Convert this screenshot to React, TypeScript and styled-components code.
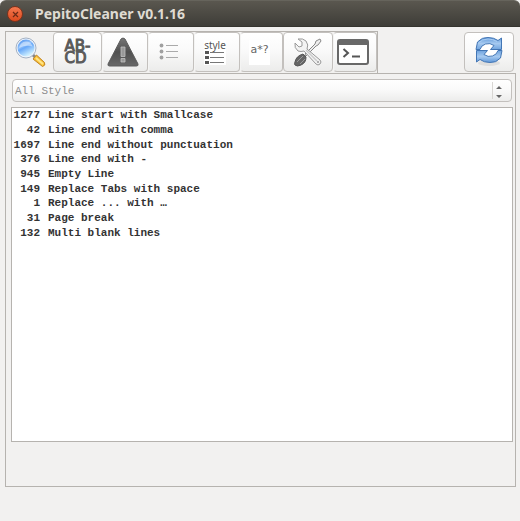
import React from "react";
import styled, { createGlobalStyle, css } from "styled-components";

const GlobalStyle = createGlobalStyle`
  *, *::before, *::after { box-sizing: border-box; }
  html { background: #f2f1f0; }
  body { margin: 0; background: #f2f1f0; }
`;

const mono = css`
  font-family: "Liberation Mono", "Courier New", monospace;
  font-size: 11px;
`;

const Window = styled.div`
  display: flex;
  flex-direction: column;
  min-height: 100vh;
  padding-bottom: 34px;
  background: #f2f1f0;
`;

const TitleBar = styled.header`
  display: flex;
  align-items: center;
  gap: 12px;
  height: 27px;
  padding: 1px 7px 0;
  border-top: 1px solid #66645c;
  border-bottom: 1px solid #35342f;
  border-radius: 6px 6px 0 0;
  background: linear-gradient(#5a574f, #3e3d38);
`;

const CloseButton = styled.button`
  display: flex;
  align-items: center;
  justify-content: center;
  width: 16px;
  height: 16px;
  padding: 0;
  border: 1px solid #7d331c;
  border-radius: 50%;
  background: linear-gradient(#f4784f, #dc4a1e);
`;

const Title = styled.h1`
  margin: 0;
  color: #dfdbd2;
  font: bold 14px/20px "Noto Sans", "Open Sans", sans-serif;
`;

const Content = styled.main`
  display: flex;
  flex: 1;
  flex-direction: column;
  padding: 4px 4px 0 5px;
`;

const Toolbar = styled.div`
  display: flex;
  align-items: flex-start;
  justify-content: space-between;
  padding-right: 2px;
`;

const TabList = styled.div`
  display: flex;
  height: 42px;
  padding-bottom: 1px;
  border: 1px solid #b6b3af;
  border-bottom: 0;
  background: #f2f1f0;
`;

const raised = css`
  border: 1px solid #c3c0bd;
  background: linear-gradient(#ffffff, #fafafa 45%, #ececeb);
`;

const Tab = styled.button<{ $width: number; $active?: boolean; $joined?: boolean }>`
  display: flex;
  align-items: center;
  justify-content: center;
  width: ${(p) => p.$width}px;
  padding: 0;
  border-radius: 4px;
  ${raised}
  ${(p) =>
    p.$joined &&
    css`
      padding-right: 4px;
      border-left-color: #f4f4f3;
    `}
  ${(p) =>
    p.$active &&
    css`
      border-color: transparent;
      background: transparent;
    `}
`;

const RefreshButton = styled.button`
  display: flex;
  align-items: center;
  justify-content: center;
  width: 50px;
  height: 40px;
  margin-top: 1px;
  padding: 0;
  border-radius: 4px;
  ${raised}
`;

const Hyphenation = styled.span`
  display: grid;
  color: #5a5a5a;
  font: 15px/12px "DejaVu Sans", sans-serif;
  -webkit-text-stroke: 1px #5a5a5a;
  text-align: left;
`;

const StyleIcon = styled.span`
  display: flex;
  flex-direction: column;
  align-items: center;
  color: #555;
  background: #fff;
  font: 10px/11px "Noto Sans", sans-serif;
`;

const Pattern = styled.span`
  padding: 3px 1px 9px;
  color: #666;
  background: #fff;
  font: 11px/13px "DejaVu Sans", sans-serif;
`;

const Panel = styled.section`
  display: flex;
  flex: 1;
  flex-direction: column;
  gap: 5px;
  padding: 5px 2px 44px 5px;
  border: 1px solid #b6b3af;
`;

const Combo = styled.label`
  display: flex;
  align-items: center;
  height: 23px;
  margin: 0 1px;
  border-radius: 4px;
  ${raised}
`;

const Select = styled.select`
  ${mono}
  flex: 1;
  min-width: 0;
  height: 21px;
  padding: 0 0 0 2px;
  border: 0;
  appearance: none;
  background: transparent;
  color: #8c8c8c;
`;

const Results = styled.div`
  flex: 1;
  border: 1px solid #b6b3af;
  background: #fff;
`;

const ResultTable = styled.table`
  ${mono}
  height: 132px;
  border-collapse: collapse;
  color: #333;
  font-weight: bold;
  line-height: 14px;
`;

const Count = styled.td`
  width: 28px;
  padding: 0;
  text-align: right;
`;

const Name = styled.th`
  padding: 0 0 0 8px;
  text-align: left;
  white-space: nowrap;
`;

const SearchIcon = () => (
  <svg width="32" height="30" viewBox="0 0 32 30" aria-hidden="true">
    <defs>
      <linearGradient id="lens" x1="0" y1="0" x2="0.5" y2="1">
        <stop offset="0" stopColor="#4a8eea" />
        <stop offset="0.45" stopColor="#8fc0fb" />
        <stop offset="0.55" stopColor="#68a8f8" />
        <stop offset="1" stopColor="#d0f1ff" />
      </linearGradient>
      <linearGradient id="grip" x1="0" y1="1" x2="1" y2="0">
        <stop offset="0" stopColor="#d18d1f" />
        <stop offset="0.5" stopColor="#ffc93a" />
        <stop offset="1" stopColor="#d18d1f" />
      </linearGradient>
    </defs>
    <path d="M18 17l4 4" stroke="#888" strokeWidth="3" />
    <path d="M19 22l3.500-4 8 7.500q1.500 3-2 4z" fill="url(#grip)" stroke="#c28526" />
    <path d="M22 21l7 6" stroke="#ffe58a" strokeWidth="2" />
    <circle cx="12" cy="11" r="10" fill="#eef4fb" stroke="#a3b1c4" />
    <circle cx="12" cy="11" r="8.500" fill="url(#lens)" />
    <path d="M5 11q1-6 7-6.500 5 0 6.500 5-7-2-13.500 1.500" fill="#fff" opacity="0.45" />
  </svg>
);

const WarningIcon = () => (
  <svg width="32" height="30" viewBox="0 0 32 30" aria-hidden="true">
    <defs>
      <linearGradient id="warn" x1="0" y1="0" x2="0" y2="1">
        <stop offset="0" stopColor="#777" />
        <stop offset="0.5" stopColor="#505050" />
        <stop offset="1" stopColor="#686868" />
      </linearGradient>
    </defs>
    <path d="M14 2q2-2 4 0l13 25q.5 2-1.500 2h-27q-2 0-1.500-2z" fill="url(#warn)" stroke="#5c5c5c" />
    <path d="M14 10h4v9.500h-4zM14 21.500h4v3.500h-4z" fill="#999" stroke="#c0c0c0" strokeWidth="0.800" />
  </svg>
);

const ListIcon = () => (
  <svg width="22" height="18" viewBox="0 0 22 18" aria-hidden="true">
    <path d="M8 2.500h12M8 8.500h12M8 14.500h12" stroke="#aaa" />
    <g fill="#a0a0a0">
      <circle cx="3.500" cy="2.500" r="1.900" />
      <circle cx="3.500" cy="8.500" r="1.900" />
      <circle cx="3.500" cy="14.500" r="1.900" />
    </g>
  </svg>
);

const StyleLines = () => (
  <svg width="22" height="14" viewBox="0 0 22 14" aria-hidden="true">
    <path d="M1 0h4v3H1zM1 5h4v3H1zM1 10h4v3H1z" fill="#555" />
    <path d="M6 1.500h14M6 6.500h14M6 11.500h14" stroke="#777" />
  </svg>
);

const ToolsIcon = () => (
  <svg width="30" height="30" viewBox="0 0 30 30" aria-hidden="true">
    <path d="M12 17L22 7l1-3 4-2 1 2-3 4-2 1-10 10z" fill="#eee" stroke="#888" />
    <path d="M2 25q1-6 8-8l3 3q0 6-5 8-4 2-6 0-1-1 0-3z" fill="#666" stroke="#555" />
    <path d="M4 25l6-6M7 27l5-5" stroke="#999" />
    <path
      d="M5 2l4 3v4L6 10 2 6q-1 5 3 8 3 1 6 0l12 13q2 2 4 0 2-2 0-4L14 12q2-4-1-8-3-3-8-2z"
      fill="#f3f3f3"
      stroke="#999"
      strokeLinejoin="round"
    />
    <path d="M13 13l11 11" stroke="#ccc" strokeWidth="1.500" />
    <circle cx="25" cy="25" r="1" fill="#999" />
  </svg>
);

const TerminalIcon = () => (
  <svg width="32" height="28" viewBox="0 0 32 28" aria-hidden="true">
    <rect x="1" y="2" width="30" height="24" rx="2" fill="#fff" stroke="#686868" strokeWidth="2" />
    <path d="M1 2h30v5H1z" fill="#686868" />
    <path d="M6.500 11l4.500 4-4.500 4" fill="none" stroke="#555" strokeWidth="2" />
    <path d="M15 18.500h8" stroke="#555" strokeWidth="2" />
  </svg>
);

const RefreshIcon = () => (
  <svg width="28" height="32" viewBox="0 0 28 32" aria-hidden="true">
    <defs>
      <linearGradient id="arrow" x1="0" y1="0" x2="0" y2="1">
        <stop offset="0" stopColor="#5f97d8" />
        <stop offset="0.5" stopColor="#a5c9f0" />
        <stop offset="1" stopColor="#6fa3de" />
      </linearGradient>
      <path
        id="turn"
        d="M1 13.500L2.500 6Q7 1 13 1.500q6 0 10 3L26.500 2v11.500H15.500L19 9.500Q15 6.500 10.500 8 6 9.500 5 13.500z"
      />
    </defs>
    <ellipse cx="14" cy="27" rx="11" ry="3" fill="#ccc" opacity="0.500" />
    <ellipse cx="14" cy="14" rx="10" ry="9" fill="#fff" />
    <use href="#turn" fill="url(#arrow)" stroke="#4376b5" strokeLinejoin="round" />
    <use href="#turn" fill="url(#arrow)" stroke="#4376b5" strokeLinejoin="round" transform="rotate(180 14 14)" />
    <path d="M3.500 7Q7 3 13 3q5 0 9 2.500" fill="none" stroke="#a9cdf3" />
  </svg>
);

const ComboArrows = () => (
  <svg width="20" height="19" viewBox="0 0 20 19" aria-hidden="true">
    <path d="M1.500 1v17" stroke="#d8d6d3" />
    <path d="M5 8l3-3 3 3zM5 14l3 3 3-3z" fill="#666" />
  </svg>
);

const tabs = [
  { label: "Search", width: 47, icon: <SearchIcon />, active: true },
  {
    label: "Hyphenation",
    width: 49,
    icon: (
      <Hyphenation>
        <span>AB-</span>
        <span>CD</span>
      </Hyphenation>
    ),
  },
  { label: "Warnings", width: 46, icon: <WarningIcon />, joined: true },
  { label: "Lists", width: 46, icon: <ListIcon />, joined: true },
  { label: "Styles", width: 46, icon: <StyleIcon>style<StyleLines /></StyleIcon>, joined: true },
  { label: "Patterns", width: 43, icon: <Pattern>a*?</Pattern>, joined: true },
  { label: "Tools", width: 50, icon: <ToolsIcon /> },
  { label: "Console", width: 44, icon: <TerminalIcon />, joined: true },
];

const results: [number, string][] = [
  [1277, "Line start with Smallcase"],
  [42, "Line end with comma"],
  [1697, "Line end without punctuation"],
  [376, "Line end with -"],
  [945, "Empty Line"],
  [149, "Replace Tabs with space"],
  [1, "Replace ... with …"],
  [31, "Page break"],
  [132, "Multi blank lines"],
];

export default function App() {
  return (
    <>
      <GlobalStyle />
      <Window>
        <TitleBar>
          <CloseButton aria-label="Close">
            <svg width="7" height="7" viewBox="0 0 7 7" aria-hidden="true">
              <path d="M1 1l5 5M6 1L1 6" stroke="#6b2a16" strokeWidth="1.200" />
            </svg>
          </CloseButton>
          <Title>PepitoCleaner v0.1.16</Title>
        </TitleBar>
        <Content>
          <Toolbar>
            <TabList role="tablist">
              {tabs.map((tab) => (
                <Tab
                  key={tab.label}
                  role="tab"
                  aria-label={tab.label}
                  aria-selected={!!tab.active}
                  $width={tab.width}
                  $active={tab.active}
                  $joined={tab.joined}
                >
                  {tab.icon}
                </Tab>
              ))}
            </TabList>
            <RefreshButton aria-label="Refresh">
              <RefreshIcon />
            </RefreshButton>
          </Toolbar>
          <Panel>
            <Combo>
              <Select aria-label="Style" defaultValue="all">
                <option value="all">All Style</option>
              </Select>
              <ComboArrows />
            </Combo>
            <Results>
              <ResultTable>
                <tbody>
                  {results.map(([count, name]) => (
                    <tr key={name}>
                      <Count>{count}</Count>
                      <Name scope="row">{name}</Name>
                    </tr>
                  ))}
                </tbody>
              </ResultTable>
            </Results>
          </Panel>
        </Content>
      </Window>
    </>
  );
}
